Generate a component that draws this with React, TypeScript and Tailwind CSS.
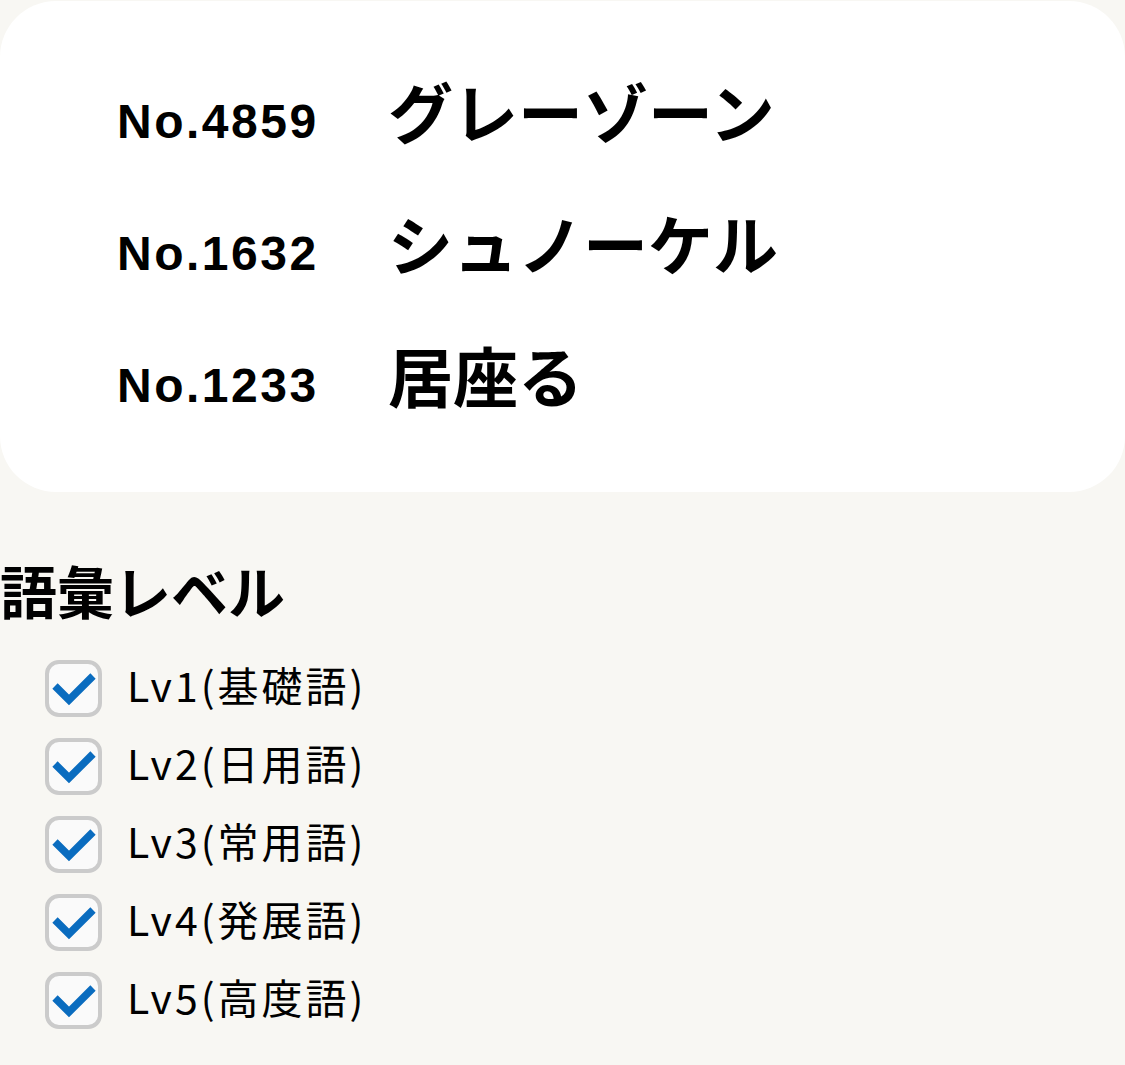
const words = [
  { no: "No.4859", word: "グレーゾーン" },
  { no: "No.1632", word: "シュノーケル" },
  { no: "No.1233", word: "居座る" },
];

const levels = [
  "Lv1(基礎語)",
  "Lv2(日用語)",
  "Lv3(常用語)",
  "Lv4(発展語)",
  "Lv5(高度語)",
];

const CheckBox = () => {
  return (
    <span className="w-[57px] h-[57px] rounded-[14px] border-[4px] border-[#cbcbcb] bg-[#fafafa] flex items-center justify-center shrink-0">
      <svg width="57" height="57" viewBox="0 0 57 57" className="-m-[4px]">
        <path d="M10 26 L24 40 L48 16" fill="none" stroke="#0a6cbf" strokeWidth="7.5" />
      </svg>
    </span>
  );
};

export default function App() {
  return (
    <div className="w-[1125px] min-h-[1065px] bg-[#f8f7f3] pt-px font-['Noto_Sans_CJK_JP',sans-serif] text-black">
      <section className="bg-white rounded-[56px] pt-[43px] pb-[52px] pl-[117px]">
        {words.map((w) => (
          <div key={w.no} className="flex items-baseline h-[132px] leading-[132px]">
            <span className="w-[271px] text-[48px] font-bold tracking-[2.5px] font-['Liberation_Sans',sans-serif]">
              {w.no}
            </span>
            <span className="text-[65px] font-bold">{w.word}</span>
          </div>
        ))}
      </section>

      <h2 className="mt-[65px] text-[57px] leading-[64px] font-bold">語彙レベル</h2>

      <ul className="mt-[28px] pl-[45px]">
        {levels.map((l) => (
          <li key={l} className="flex items-center h-[78px] gap-[25px]">
            <CheckBox />
            <span className="text-[41px] leading-none tracking-[3px] pb-[7px] font-['Noto_Sans_CJK_JP',sans-serif]">{l}</span>
          </li>
        ))}
      </ul>
    </div>
  );
}
